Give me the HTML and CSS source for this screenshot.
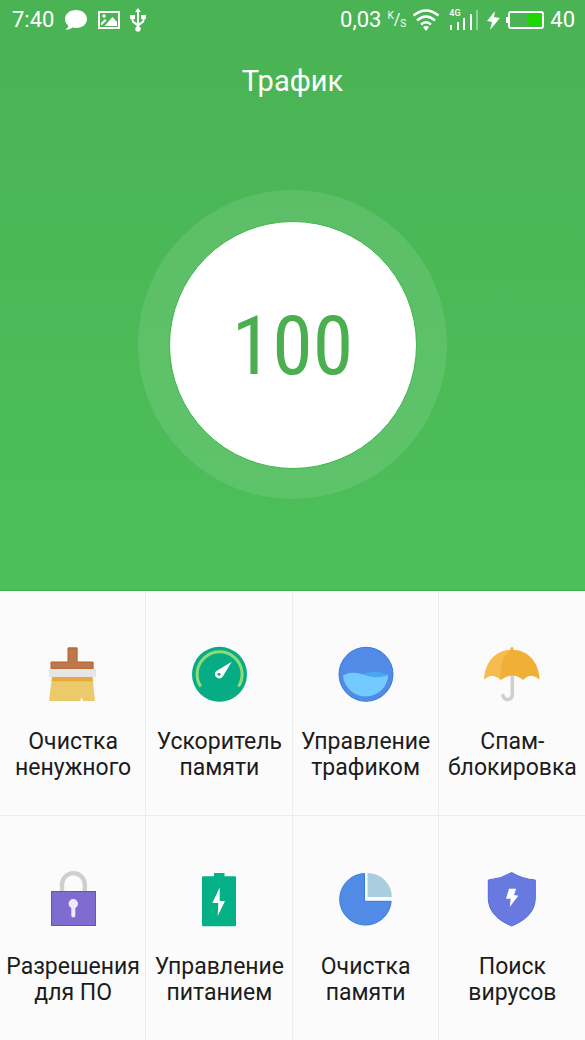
FILE: index.html
```html
<!DOCTYPE html>
<html lang="ru">
<head>
<meta charset="utf-8">
<meta name="viewport" content="width=device-width, initial-scale=1">
<title>Трафик</title>
<link rel="stylesheet" href="styles.css">
</head>
<body>
<div class="screen">
  <header class="hero">
    <div class="status">
      <div class="status-left">
        <span>7:40</span>
        <svg width="24" height="22" viewBox="0 0 24 22" fill="#fff"><path d="M12 1C5.500 1 1 5 1 10c0 3 1.300 5 3.300 6.500C4.300 18 3.500 19.500 1 20.500c3 .4 5.500-.4 7.200-2 1.200.3 2.500.5 3.800.5 6.500 0 11-4 11-9S18.500 1 12 1z"/></svg>
        <svg width="22" height="18" viewBox="0 0 22 18"><rect x="1" y="1" width="20" height="16" fill="none" stroke="#fff" stroke-width="2"/><circle cx="6" cy="5" r="1.700" fill="#fff"/><path d="M3 12l4-4 1.500 1.500L4 14H3zM6.500 15L14.500 6 19 11v4z" fill="#fff"/></svg>
        <svg width="16" height="26" viewBox="0 0 16 26" fill="none" stroke="#fff" stroke-width="2"><path d="M8 4v18M2.500 9v4.500c0 3 5.500 2.500 5.500 6 0-3.500 5.500-3 5.500-6V9"/><path d="M8 1l3 4H5zM0 8h5v4H0zM11 8h5v4h-5z" fill="#fff" stroke="none"/><circle cx="8" cy="22" r="2.700" fill="#fff" stroke="none"/></svg>
      </div>
      <div class="status-right">
        <span>0,03</span>
        <span class="unit"><sup>K</sup><i>/</i><sub>S</sub></span>
        <svg class="wifi" width="28" height="22" viewBox="0 0 28 22" fill="none" stroke="#fff" stroke-width="2.400"><path d="M1.500 6.500Q14-3.500 26.500 6.500M5 11.500q9-8 18 0M9 15.500q5-4.500 10 0"/><path d="M14 22l-3-4q3-2 6 0z" fill="#fff" stroke="none"/></svg>
        <span class="cell-signal"><small>4G</small>
        <svg width="30" height="22" viewBox="0 0 30 22" fill="#fff"><path d="M1 16h2v5H1zM8 13h2v8H8zM14 9h2v12h-2zM21 5h2v16h-2z"/><path d="M27 1h2v20h-2z" opacity=".4"/></svg></span>
        <svg class="charge" width="13" height="20" viewBox="0 0 13 20" fill="#fff"><path d="M8 1L0 11l5 1-2 8L13 8 7 7z"/></svg>
        <svg width="38" height="20" viewBox="0 0 38 20"><rect x="3" y="2" width="34" height="16" rx="2" fill="none" stroke="#fff" stroke-width="2"/><path d="M0 7h2v6H0z" fill="#fff"/><path d="M22 4h13v12H22z" fill="#1fd600"/></svg>
        <span>40</span>
      </div>
    </div>
    <h1 class="title">Трафик</h1>
    <div class="ring"><div class="score">100</div></div>
  </header>
  <nav class="tools">
    <a class="tool" href="#clean">
      <svg class="icon" viewBox="0 0 60 60"><path d="M25 3.500h9.300V19H25z" fill="#bd774a"/><path d="M8 18h42.300v7.500H8z" fill="#bd774a"/><path d="M25 4h9v14h16v7H8v-7h17z" fill="none" stroke="#b5642f"/><path d="M9 33h40.500L52 57H40l-1.300-4-1.700 4H6z" fill="#ebca6b"/><path d="M9 33h40.500l.4 4.300H8.600z" fill="#e7a83e"/><path d="M6 25h47v8H6z" fill="#e6e6e6"/></svg>
      <span>Очистка ненужного</span>
    </a>
    <a class="tool" href="#boost">
      <svg class="icon" viewBox="0 0 60 60"><circle cx="30.500" cy="30.300" r="27.500" fill="#06ac84"/><path d="M11.700 42.500A22.500 22.500 0 1 1 49.500 42.500" fill="none" stroke="#8edc79" stroke-width="3"/><path d="M27 27.200L42.700 17.700 33.500 33a4.300 4.300 0 1 1-6.500-5.800z" fill="#fff"/><circle cx="30" cy="30.300" r="1.500" fill="#06ac84"/></svg>
      <span>Ускоритель памяти</span>
    </a>
    <a class="tool" href="#traffic">
      <svg class="icon" viewBox="0 0 60 60"><circle cx="30" cy="30.300" r="27" fill="#528be6" stroke="#347ddf"/><path d="M24 31Q38 25 52 30.500V34H28z" fill="#4ba6f2"/><path d="M7 31.500C15 27 23 29 30 31.500S45 34 52.300 31a22.700 22.700 0 0 1-45.300.5z" fill="#72caff"/></svg>
      <span>Управление трафиком</span>
    </a>
    <a class="tool" href="#spam">
      <svg class="icon" viewBox="0 0 60 60"><path d="M30.300 30v21.500a4.700 4.700 0 0 1-9.300 0" fill="none" stroke="#cfcfcf" stroke-width="3.500" stroke-linecap="round"/><path d="M28.500 6V4.500a1.500 1.500 0 0 1 3 0V6C46 6 57.500 19 57.500 35.500Q49 28 41.300 36 30 27 18.700 36 10 28 2.500 35.500C2.500 19 14 6 28.500 6z" fill="#efb035"/><path d="M28.500 6C14 6 2.500 19 2.500 35.500Q10 28 18.700 36C18 22 21 12 28.500 6z" fill="#f7bb50"/></svg>
      <span>Спам-блокировка</span>
    </a>
    <a class="tool" href="#permissions">
      <svg class="icon" viewBox="0 0 60 60"><path d="M19 23v-7.500a11.400 11.400 0 0 1 22.800 0V23" fill="none" stroke="#cfcfcf" stroke-width="4.400"/><rect x="8.500" y="22.500" width="44" height="34" fill="#7e6cd0" stroke="#6651c6"/><circle cx="30.300" cy="34.700" r="4.700" fill="#efeaff"/><path d="M30.300 36v10.500" stroke="#efeaff" stroke-width="4" stroke-linecap="round"/></svg>
      <span>Разрешения для ПО</span>
    </a>
    <a class="tool" href="#power">
      <svg class="icon" viewBox="0 0 60 60"><path d="M25 7.300V4h10.500v3.300H46a1 1 0 0 1 1 1v48a1 1 0 0 1-1 1H14a1 1 0 0 1-1-1v-48a1 1 0 0 1 1-1z" fill="#06b086"/><path d="M30.700 18.500L23.300 34h6l-.6 13L36 32h-5.300z" fill="#fff"/></svg>
      <span>Управление питанием</span>
    </a>
    <a class="tool" href="#memory">
      <svg class="icon" viewBox="0 0 60 60"><path d="M28.500 4.500V32.300h26.700A25.800 25.800 0 1 1 28.500 4.500z" fill="#528be6" stroke="#347ddf"/><path d="M31.500 4A24.500 24.500 0 0 1 55.900 28H31.500z" fill="#a9cedf"/></svg>
      <span>Очистка памяти</span>
    </a>
    <a class="tool" href="#virus">
      <svg class="icon" viewBox="0 0 60 60"><path d="M29.700 3.500Q40 10 53.300 11v18c0 13-9 22-23.600 28C15 51 6.300 42 6.300 29V11Q19 10 29.700 3.500z" fill="#687adf" stroke="#536ada"/><path d="M27 19.700h7.200L32 26l4.300.7L27.700 38l1-8.300H24z" fill="#fff"/></svg>
      <span>Поиск вирусов</span>
    </a>
  </nav>
</div>
</body>
</html>
```
FILE: styles.css
```css
* { box-sizing: border-box; }

body {
  margin: 0;
  background: #fbfbfb;
  font-family: Roboto, "Noto Sans", sans-serif;
}

.screen {
  min-height: 100vh;
  display: flex;
  flex-direction: column;
}

.hero {
  display: flex;
  flex-direction: column;
  align-items: center;
  padding-bottom: 91px;
  background: linear-gradient(#4ab354, #4cbf5a);
  border-bottom: 1px solid #3eae4a;
  color: #fff;
}

.status {
  align-self: stretch;
  height: 40px;
  padding: 0 10px 0 12px;
  display: flex;
  justify-content: space-between;
  align-items: center;
  font-size: 22px;
  line-height: 26px;
}

.status-left, .status-right { display: flex; align-items: center; }
.status-left { gap: 10px; }
.status-right { gap: 6px; }

.unit { display: flex; font-size: 10px; line-height: 20px; }
.unit sup, .unit sub { font-size: 10px; line-height: 12px; vertical-align: baseline; }
.unit sup { align-self: flex-start; }
.unit sub { align-self: flex-end; }
.unit i { font-size: 16px; font-style: normal; }

.wifi { margin: 0 3px 0 0; }
.charge { margin-left: 2px; }

.cell-signal { position: relative; display: flex; }
.cell-signal small {
  position: absolute;
  left: 0;
  top: 0;
  font-size: 9px;
  line-height: 9px;
  font-weight: 500;
}

.title {
  margin: 22px 0 0;
  font-size: 29px;
  line-height: 38px;
  font-weight: 400;
}

.ring {
  width: 309px;
  height: 309px;
  margin-top: 90px;
  display: grid;
  place-items: center;
  border-radius: 50%;
  background: rgba(255, 255, 255, 0.1);
}

.score {
  width: 248px;
  height: 248px;
  padding-top: 2px;
  display: grid;
  place-items: center;
  border-radius: 50%;
  background: #fff;
  border: 1px solid #3eb64b;
  color: #4bae4f;
  font: 400 82px/96px "Roboto Condensed", Roboto, sans-serif;
}

.tools {
  flex: 1;
  display: grid;
  grid-template-columns: repeat(4, 1fr);
  grid-auto-rows: 1fr;
}

.tool {
  display: flex;
  flex-direction: column;
  align-items: center;
  gap: 25px;
  padding: 53px 4px 31px 5px;
  border-right: 1px solid #ececec;
  border-bottom: 1px solid #ececec;
  color: #1c1c1c;
  font-size: 23px;
  line-height: 26px;
  text-align: center;
  text-decoration: none;
}

.tool:nth-child(4n) { border-right: 0; }
.tool:nth-child(n + 5) { border-bottom: 0; }

.icon { width: 60px; height: 60px; }
```
